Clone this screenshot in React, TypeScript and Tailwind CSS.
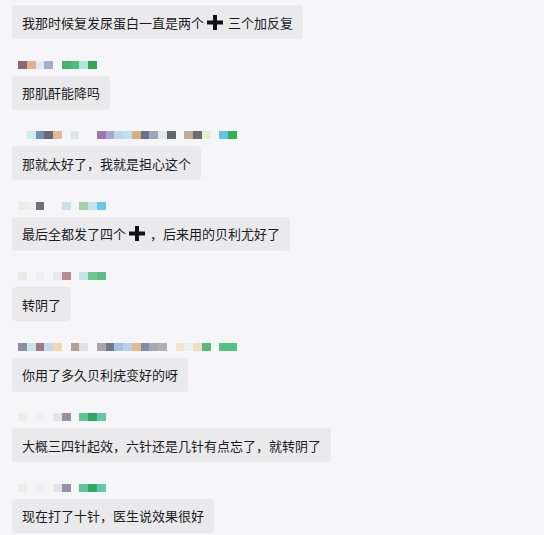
const R6 = ['bg-[#eceee8]', '', 'bg-[#eef0f2]', '', 'bg-[#e4e4ec]', 'bg-[#9890a8]', '', 'bg-[#62c29a]', 'bg-[#2fa862]', 'bg-[#62c8a8]'];

const messages: { name?: string[]; parts: (string | null)[] }[] = [
  { parts: ['我那时候复发尿蛋白一直是两个', null, '三个加反复'] },
  {
    name: ['bg-[#8e6478]', 'bg-[#e0b28c]', 'bg-[#e2eaf0]', 'bg-[#a5aec8]', '', 'bg-[#45b36b]', 'bg-[#52ba7a]', 'bg-[#aee8da]', 'bg-[#2fa65b]'],
    parts: ['那肌酐能降吗'],
  },
  {
    name: [
      '', 'bg-[#cdeff0]', 'bg-[#7091b8]', 'bg-[#666a76]', 'bg-[#e2b896]', '', 'bg-[#dce6e8]', '', '',
      'bg-[#9a78aa]', 'bg-[#a9a6cc]', 'bg-[#bcd6ea]', 'bg-[#c4dcee]', 'bg-[#d6b07a]', 'bg-[#697089]', 'bg-[#9ea6ba]',
      'bg-[#e2e6ea]', 'bg-[#62646c]', '', 'bg-[#c4a898]', 'bg-[#6e6e72]', 'bg-[#e8ecd2]', '', 'bg-[#62c4ea]', 'bg-[#34b054]',
    ],
    parts: ['那就太好了，我就是担心这个'],
  },
  {
    name: ['bg-[#eceee4]', 'bg-[#f0f0f0]', 'bg-[#707276]', '', '', 'bg-[#c8e2ea]', '', 'bg-[#a8d0a4]', 'bg-[#c2e4ee]', 'bg-[#6cc6ec]'],
    parts: ['最后全都发了四个', null, '，后来用的贝利尤好了'],
  },
  {
    name: ['bg-[#e8ebe0]', '', 'bg-[#eceef2]', '', 'bg-[#e8e8ee]', 'bg-[#b88a92]', '', 'bg-[#bfe8e4]', 'bg-[#6ec890]', 'bg-[#5cbf80]'],
    parts: ['转阴了'],
  },
  {
    name: [
      'bg-[#8c8ca2]', 'bg-[#c6e6ec]', 'bg-[#a07a82]', 'bg-[#c6d8f2]', 'bg-[#f0d8b6]', '', 'bg-[#b2a29a]', 'bg-[#e2e2e2]', '',
      'bg-[#b0a2aa]', 'bg-[#707892]', 'bg-[#a6c0e2]', 'bg-[#b8d0ea]', 'bg-[#e8b890]', 'bg-[#7890b0]', 'bg-[#a8a8b2]',
      'bg-[#b0b0ba]', '', 'bg-[#f8e2ca]', 'bg-[#e8f2f2]', 'bg-[#f0dcc0]', 'bg-[#5cb876]', '', 'bg-[#52c282]', 'bg-[#52c282]',
    ],
    parts: ['你用了多久贝利疣变好的呀'],
  },
  { name: R6, parts: ['大概三四针起效，六针还是几针有点忘了，就转阴了'] },
  { name: R6, parts: ['现在打了十针，医生说效果很好'] },
];

const Plus = () => (
  <span className="inline-block w-[16px] h-[15px] ml-[3px] mr-[5px] align-[-3px]">
    <svg width="16" height="15" viewBox="0 0 16 15">
      <rect x="6" y="0" width="4" height="15" fill="#111" />
      <rect x="0" y="5.5" width="16" height="4" fill="#111" />
    </svg>
  </span>
);

const App = () => {
  return (
    <div
      className="w-[544px] h-[535px] overflow-hidden bg-[#f6f6f8] pl-[12px] pt-[5px]"
      style={{ fontFamily: '"Noto Sans CJK SC", "Noto Sans", sans-serif' }}
    >
      {messages.map((m, i) => (
        <div key={i} className={i === 0 ? '' : 'mt-[21.5px]'}>
          {m.name && (
            <div className="flex ml-[6px] mb-[7px] h-[8px]">
              {m.name.map((c, j) => (
                <div key={j} className={`w-[8.75px] h-[8px] shrink-0 ${c}`} />
              ))}
            </div>
          )}
          <div className="inline-flex items-center h-[34px] px-[10px] rounded-[4px] bg-[#eaeaec] text-[13px] leading-none text-[#1c1c1c] whitespace-nowrap">
            {m.parts.map((p, j) => (p === null ? <Plus key={j} /> : <span key={j}>{p}</span>))}
          </div>
        </div>
      ))}
    </div>
  );
};

export default App;
